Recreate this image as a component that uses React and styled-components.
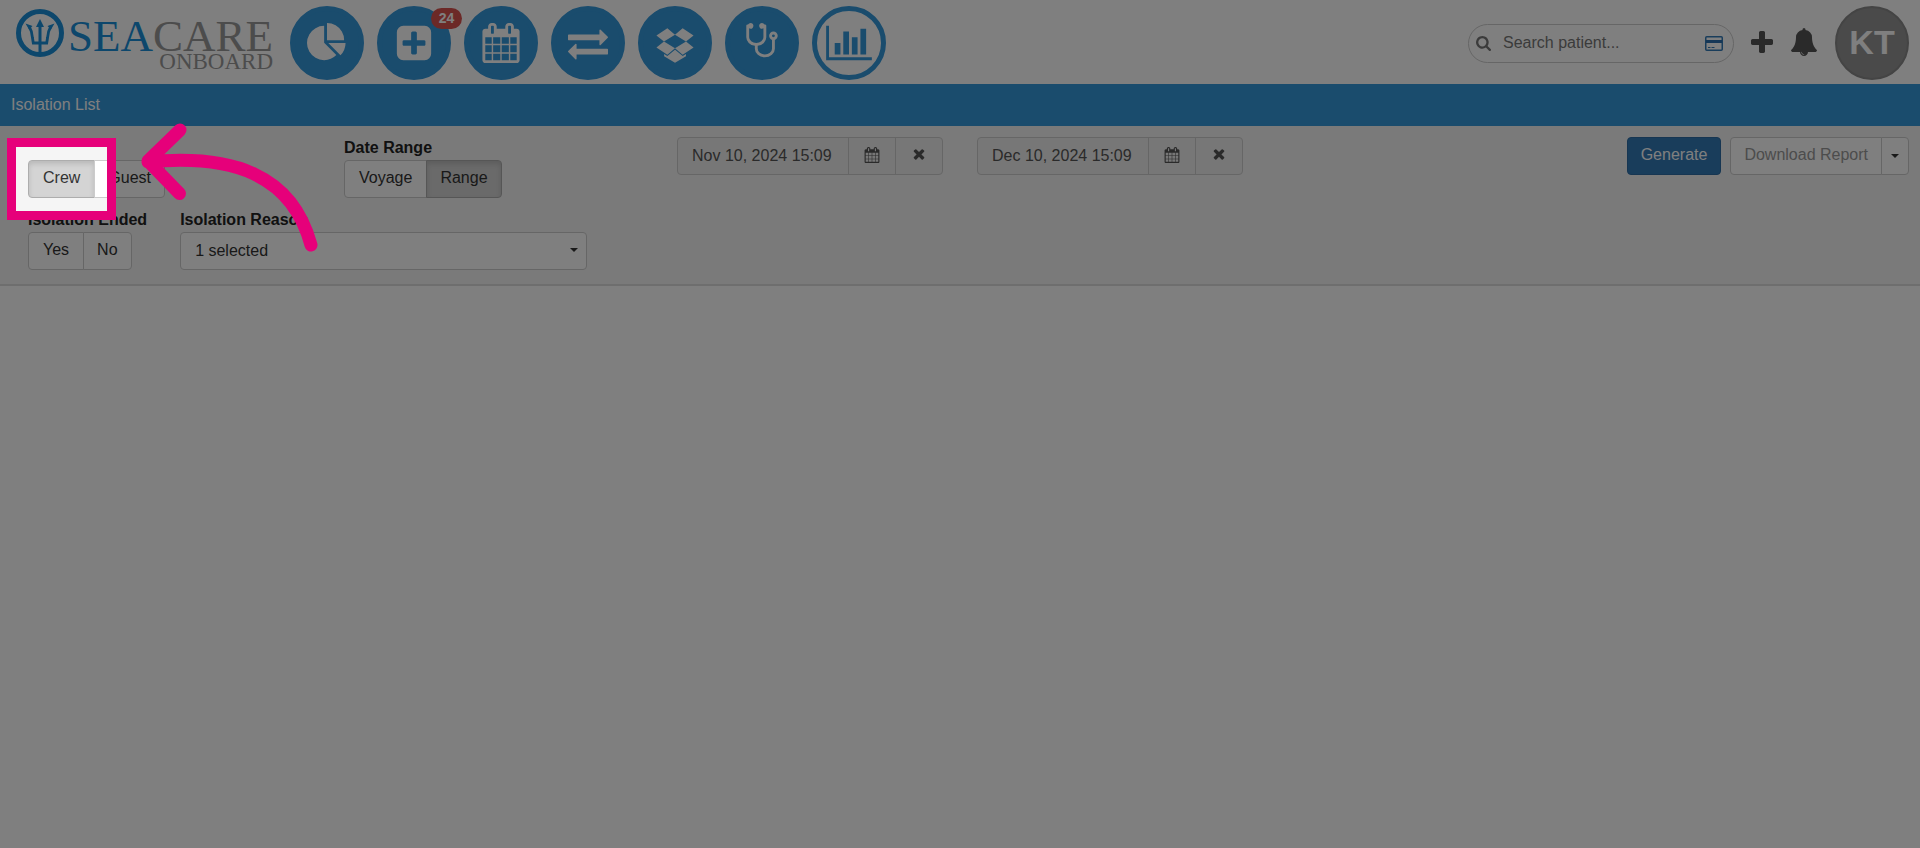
import React from 'react'
import styled, { createGlobalStyle } from 'styled-components'

const icons = {
  pie: {
    box: '0 0 1792 1792',
    d: 'M768 890l546 546q-106 108-247.500 168t-298.500 60q-209 0-385.500-103t-279.500-279.500-103-385.500 103-385.500 279.500-279.500 385.500-103v762zm187 6h773q0 157-60 298.500t-168 247.500zm709-128h-768v-768q209 0 385.500 103t279.500 279.500 103 385.500z',
  },
  plusSquare: {
    box: '0 0 1792 1792',
    d: 'M1408 960v-128q0-26-19-45t-45-19h-320v-320q0-26-19-45t-45-19h-128q-26 0-45 19t-19 45v320h-320q-26 0-45 19t-19 45v128q0 26 19 45t45 19h320v320q0 26 19 45t45 19h128q26 0 45-19t19-45v-320h320q26 0 45-19t19-45zm256-544v960q0 119-84.500 203.500t-203.500 84.500h-960q-119 0-203.500-84.500t-84.500-203.500v-960q0-119 84.500-203.500t203.500-84.500h960q119 0 203.500 84.500t84.500 203.500z',
  },
  calendar: {
    box: '0 0 1792 1792',
    d: 'M192 1664h288v-288h-288v288zm352 0h320v-288h-320v288zm-352-352h288v-320h-288v320zm352 0h320v-320h-320v320zm-352-384h288v-288h-288v288zm736 736h320v-288h-320v288zm-384-736h320v-288h-320v288zm768 736h288v-288h-288v288zm-384-352h320v-320h-320v320zm-352-864v-288q0-13-9.500-22.500t-22.500-9.500h-64q-13 0-22.500 9.500t-9.500 22.500v288q0 13 9.500 22.500t22.500 9.500h64q13 0 22.500-9.500t9.500-22.500zm736 864h288v-320h-288v320zm-384-384h320v-288h-320v288zm384 0h288v-288h-288v288zm32-480v-288q0-13-9.500-22.500t-22.500-9.500h-64q-13 0-22.500 9.500t-9.500 22.500v288q0 13 9.500 22.500t22.500 9.500h64q13 0 22.500-9.500t9.500-22.500zm384-64v1280q0 52-38 90t-90 38h-1408q-52 0-90-38t-38-90v-1280q0-52 38-90t90-38h128v-96q0-66 47-113t113-47h64q66 0 113 47t47 113v96h384v-96q0-66 47-113t113-47h64q66 0 113 47t47 113v96h128q52 0 90 38t38 90z',
  },
  exchange: {
    box: '0 0 1792 1792',
    d: 'M1792 1184v192q0 13-9.500 22.500t-22.500 9.500h-1376v192q0 13-9.500 22.500t-22.500 9.500q-12 0-24-10l-319-320q-9-9-9-22 0-14 9-23l320-320q9-9 23-9 13 0 22.500 9.500t9.500 22.500v192h1376q13 0 22.500 9.500t9.500 22.500zm0-544q0 14-9 23l-320 320q-9 9-23 9-13 0-22.500-9.500t-9.500-22.500v-192h-1376q-13 0-22.500-9.500t-9.500-22.500v-192q0-13 9.500-22.500t22.500-9.500h1376v-192q0-14 9-23t23-9q12 0 24 10l319 319q9 9 9 23z',
  },
  dropbox: {
    box: '0 0 1792 1792',
    d: 'M402 829l494 305-342 285-490-319zm986 555v108l-490 293v1l-1-1-1 1v-1l-489-293v-108l147 96 342-284v-2l1 1 1-1v2l343 284zm-834-1145l342 285-494 304-338-270zm836 590l338 271-489 319-343-285zm-152-590l489 319-338 270-494-304z',
  },
  stethoscope: {
    box: '-192 0 1792 1792',
    d: 'M1280 576q0-26-19-45t-45-19-45 19-19 45 19 45 45 19 45-19 19-45zm128 0q0 62-35.500 111t-92.500 70v395q0 159-131.500 271.500t-316.500 112.500-316.500-112.500-131.500-271.500v-132q-164-20-274-128t-110-252v-512q0-26 19-45t45-19q6 0 16 2 17-30 47-48t65-18q53 0 90.500 37.500t37.500 90.500-37.500 90.500-90.500 37.500q-33 0-64-18v402q0 106 94 181t226 75 226-75 94-181v-402q-31 18-64 18-53 0-90.500-37.500t-37.500-90.500 37.500-90.500 90.500-37.500q35 0 65 18t47 48q10-2 16-2 26 0 45 19t19 45v512q0 144-110 252t-274 128v132q0 106 94 181t226 75 226-75 94-181v-395q-57-21-92.500-70t-35.500-111q0-80 56-136t136-56 136 56 56 136z',
  },
  chart: {
    box: '0 0 2048 1792',
    d: 'M640 896v512h-256v-512h256zm384-512v1024h-256v-1024h256zm1024 1152v128h-2048v-1536h128v1408h1920zm-640-896v768h-256v-768h256zm384-384v1152h-256v-1152h256z',
  },
  search: {
    box: '64 128 1664 1664',
    d: 'M1216 832q0-185-131.500-316.500t-316.500-131.500-316.500 131.500-131.500 316.500 131.500 316.500 316.500 131.500 316.500-131.500 131.500-316.500zm512 832q0 52-38 90t-90 38q-54 0-90-38l-343-342q-179 124-399 124-143 0-273.500-55.500t-225-150-150-225-55.500-273.500 55.500-273.500 150-225 225-150 273.500-55.500 273.500 55.500 225 150 150 225 55.500 273.500q0 220-124 399l343 343q37 37 37 90z',
  },
  plus: {
    box: '192 128 1408 1408',
    d: 'M1600 736v192q0 40-28 68t-68 28h-416v416q0 40-28 68t-68 28h-192q-40 0-68-28t-28-68v-416h-416q-40 0-68-28t-28-68v-192q0-40 28-68t68-28h416v-416q0-40 28-68t68-28h192q40 0 68 28t28 68v416h416q40 0 68 28t28 68z',
  },
  bell: {
    box: '0 0 1792 1792',
    d: 'M912 1696q0-16-16-16-59 0-101.500-42.500t-42.500-101.500q0-16-16-16t-16 16q0 73 51.500 124.500t124.500 51.500q16 0 16-16zm816-288q0 52-38 90t-90 38h-448q0 106-75 181t-181 75-181-75-75-181h-448q-52 0-90-38t-38-90q50-42 91-88t85-119.500 74.500-158.500 50-206 19.500-260q0-152 117-282.500t307-158.500q-8-19-8-39 0-40 28-68t68-28 68 28 28 68q0 20-8 39 190 28 307 158.500t117 282.500q0 139 19.500 260t50 206 74.500 158.500 85 119.500 91 88z',
  },
  times: {
    box: '0 128 1792 1792',
    d: 'M1490 1322q0 40-28 68l-136 136q-28 28-68 28t-68-28l-294-294-294 294q-28 28-68 28t-68-28l-136-136q-28-28-28-68t28-68l294-294-294-294q-28-28-28-68t28-68l136-136q28-28 68-28t68 28l294 294 294-294q28-28 68-28t68 28l136 136q28 28 28 68t-28 68l-294 294 294 294q28 28 28 68z',
  },
}

const Icon = ({ name, size, width }) => (
  <svg width={width || size} height={size} viewBox={icons[name].box} fill="currentColor" aria-hidden="true">
    <path d={icons[name].d} />
  </svg>
)

const Caret = () => (
  <svg width="8" height="4" viewBox="0 0 8 4" fill="currentColor" aria-hidden="true">
    <path d="M0 0h8l-4 4z" />
  </svg>
)

const navItems = [
  { icon: 'pie', label: 'Dashboard' },
  { icon: 'plusSquare', label: 'Medical cases', badge: 24 },
  { icon: 'calendar', label: 'Calendar' },
  { icon: 'exchange', label: 'Transfers' },
  { icon: 'dropbox', label: 'Inventory' },
  { icon: 'stethoscope', label: 'Examinations' },
  { icon: 'chart', label: 'Reports', active: true },
]

const DateField = ({ label, value }) => (
  <DateGroup>
    <DateInput aria-label={label} defaultValue={value} readOnly />
    <AddonButton aria-label={`Pick ${label}`}><Icon name="calendar" size={16} /></AddonButton>
    <AddonButton aria-label={`Clear ${label}`}><Icon name="times" size={16} /></AddonButton>
  </DateGroup>
)

const App = () => (
  <Page>
    <GlobalStyle />
    <Header>
      <Logo href="#">
        <svg width="48" height="48" viewBox="0 0 48 48" fill="none" stroke="currentColor" aria-hidden="true">
          <circle cx="24" cy="24" r="21.500" strokeWidth="5" />
          <path d="M24 17v28" strokeWidth="3" />
          <path d="M24 10l4 8h-8z" fill="currentColor" stroke="none" />
          <path d="M13 17q3 5 3.500 12l.8 5h13.400l.8-5q.5-7 3.500-12" strokeWidth="2.800" />
          <path d="M9.500 14.500l7 2.500-3.500 3.500zM38.500 14.500l-7 2.500 3.500 3.500z" fill="currentColor" stroke="none" />
        </svg>
        <LogoText>
          <LogoName>SEA<span>CARE</span></LogoName>
          <LogoSub>ONBOARD</LogoSub>
        </LogoText>
      </Logo>
      <Nav>
        {navItems.map(item => (
          <NavLink key={item.icon} href="#" aria-label={item.label} $active={item.active}>
            <Icon name={item.icon} size={40} width={item.icon === 'chart' ? 46 : 40} />
            {item.badge ? <Badge>{item.badge}</Badge> : null}
          </NavLink>
        ))}
      </Nav>
      <Tools>
        <SearchBox>
          <Icon name="search" size={15} />
          <SearchInput type="text" aria-label="Search patient" placeholder="Search patient..." />
          <svg width="18" height="15" viewBox="0 0 18 15" fill="none" aria-hidden="true">
            <rect x=".75" y=".75" width="16.500" height="13.500" rx="1" stroke="#337ab7" strokeWidth="1.500" />
            <path d="M1 5.500h16" stroke="#2a6fae" strokeWidth="3" />
            <path d="M3 11.500h2.500M6.500 11.500h3" stroke="#337ab7" />
          </svg>
        </SearchBox>
        <ToolButton aria-label="Add"><Icon name="plus" size={22} /></ToolButton>
        <ToolButton aria-label="Notifications"><Icon name="bell" size={28} /></ToolButton>
        <Avatar>KT</Avatar>
      </Tools>
    </Header>
    <TitleBar>Isolation List</TitleBar>
    <Filters>
      <FilterRow>
        <Field $unlabelled>
          <Group>
            <Button $active>Crew</Button>
            <Button>Guest</Button>
          </Group>
        </Field>
        <Field role="group" aria-labelledby="date-range">
          <Label as="span" id="date-range">Date Range</Label>
          <Group>
            <Button>Voyage</Button>
            <Button $active>Range</Button>
          </Group>
        </Field>
        <DateField label="start date" value="Nov 10, 2024 15:09" />
        <LastCell>
          <DateField label="end date" value="Dec 10, 2024 15:09" />
          <Actions>
            <Button $primary>Generate</Button>
            <Group>
              <Button $muted>Download Report</Button>
              <Button $narrow aria-label="Download options"><Caret /></Button>
            </Group>
          </Actions>
        </LastCell>
      </FilterRow>
      <ReasonRow>
        <Field role="group" aria-labelledby="isolation-ended">
          <Label as="span" id="isolation-ended">Isolation Ended</Label>
          <Group>
            <Button>Yes</Button>
            <Button>No</Button>
          </Group>
        </Field>
        <Field>
          <Label htmlFor="reason">Isolation Reason</Label>
          <SelectWrap>
            <Select id="reason">
              <option>1 selected</option>
            </Select>
            <Caret />
          </SelectWrap>
        </Field>
      </ReasonRow>
    </Filters>
    <Spotlight />
    <Arrow width="180" height="136" viewBox="140 120 180 136" aria-hidden="true">
      <path d="M180 130L148 161L179.500 193.500M148 162C232 154 292 174 311 245" />
    </Arrow>
  </Page>
)

export default App

const GlobalStyle = createGlobalStyle`
*{
  box-sizing:border-box;
}
body{
  margin:0;
  background:#fff;
  color:#333;
  font-family:"Liberation Sans", Arial, sans-serif;
  font-size:16px;
  line-height:21px;
}
button,input,select{
  font:inherit;
  color:inherit;
  margin:0;
}
svg{
  display:block;
  flex:none;
}
`
const Page = styled.div`
position:relative;
min-height:100vh;
overflow:hidden;
`
const Header = styled.header`
display:flex;
align-items:center;
height:84px;
padding:2px 11px 0 16px;
`
const Logo = styled.a`
display:flex;
align-items:flex-start;
width:274px;
height:68px;
gap:4px;
color:#1a8fd8;
text-decoration:none;
font-family:"Liberation Serif", "Times New Roman", serif;
`
const LogoText = styled.div`
display:flex;
flex-direction:column;
align-items:flex-end;
padding-top:11px;
`
const LogoName = styled.div`
font-size:45px;
line-height:32px;
span{
  color:#999;
}
`
const LogoSub = styled.div`
font-size:23px;
line-height:20px;
color:#999;
`
const Nav = styled.nav`
display:flex;
gap:13px;
`
const NavLink = styled.a`
position:relative;
display:flex;
align-items:center;
justify-content:center;
width:74px;
height:74px;
border:5px solid #3498db;
border-radius:50%;
background:${props => props.$active ? '#fff' : '#3498db'};
color:${props => props.$active ? '#3498db' : '#fff'};
`
const Badge = styled.span`
position:absolute;
top:-3px;
right:-16px;
width:31px;
border-radius:11px;
background:#d9534f;
color:#fff;
font-size:14px;
font-weight:700;
line-height:21px;
text-align:center;
`
const Tools = styled.div`
display:flex;
align-items:center;
gap:17px;
margin-left:auto;
`
const SearchBox = styled.div`
display:flex;
align-items:center;
width:266px;
height:39px;
padding:0 10px 0 7px;
border:1px solid #ccc;
border-radius:20px;
color:#777;
`
const SearchInput = styled.input`
flex:1;
min-width:0;
padding:0 0 2px 12px;
border:0;
outline:none;
background:transparent;
&::placeholder{
  color:#777;
  opacity:1;
}
`
const ToolButton = styled.button`
padding:0 0 2px;
border:0;
background:none;
color:#555;
`
const Avatar = styled.div`
width:74px;
height:74px;
border:2px solid #888;
border-radius:50%;
background:#949494;
color:#fff;
font-size:34px;
font-weight:700;
line-height:68px;
text-align:center;
`
const TitleBar = styled.div`
height:42px;
padding:0 11px;
background:#3498db;
color:#fff;
line-height:42px;
`
const Filters = styled.form`
display:flex;
flex-direction:column;
gap:11px;
padding:11px 11px 14px 28px;
border-bottom:2px solid #ddd;
background:#f5f5f5;
`
const FilterRow = styled.div`
display:grid;
grid-template-columns:316fr 333fr 300fr 932fr;
`
const ReasonRow = styled.div`
display:flex;
gap:33px;
`
const Field = styled.div`
padding-top:${props => props.$unlabelled ? '23px' : '0'};
`
const Label = styled.label`
display:block;
margin-bottom:2px;
color:#222;
font-weight:700;
`
const Group = styled.div`
display:flex;
& > button + button{
  margin-left:-1px;
  border-top-left-radius:0;
  border-bottom-left-radius:0;
}
& > button:not(:last-child){
  border-top-right-radius:0;
  border-bottom-right-radius:0;
}
& > button:last-child:not(:has(svg)){
  padding-right:13px;
  padding-left:13px;
}
`
const Button = styled.button.attrs({ type: 'button' })`
height:38px;
padding:0 ${props => props.$narrow ? '9px' : props.$primary || props.$muted ? '13px' : '14px'} ${props => props.$narrow ? '0' : '3px'};
border:1px solid ${props => props.$primary ? '#2e6da4' : props.$active ? '#adadad' : '#ccc'};
border-radius:4px;
background:${props => props.$primary ? '#337ab7' : props.$active ? '#d4d4d4' : '#fff'};
box-shadow:${props => props.$active ? 'inset 0 3px 5px rgba(0,0,0,.125)' : 'none'};
color:${props => props.$primary ? '#fff' : props.$muted ? '#999' : '#333'};
`
const LastCell = styled.div`
display:flex;
justify-content:space-between;
align-items:flex-start;
`
const Actions = styled.div`
display:flex;
gap:9px;
`
const DateGroup = styled.div`
display:flex;
height:38px;
width:266px;
border:1px solid #ccc;
border-radius:4px;
background:#eee;
`
const DateInput = styled.input`
flex:1;
min-width:0;
padding:0 14px 2px;
border:0;
outline:none;
background:transparent;
color:#555;
`
const AddonButton = styled.button.attrs({ type: 'button' })`
display:flex;
align-items:center;
justify-content:center;
width:47px;
padding:0 0 2px;
border:0;
border-left:1px solid #ccc;
background:transparent;
color:#555;
`
const SelectWrap = styled.div`
display:grid;
grid-template-columns:1fr 16px;
align-items:center;
width:407px;
height:38px;
border:1px solid #ccc;
border-radius:4px;
background:#fff;
`
const Select = styled.select`
grid-area:1 / 1 / 2 / 3;
width:100%;
height:100%;
padding:0 14px 2px;
border:0;
outline:none;
appearance:none;
background:transparent;
& + svg{
  grid-area:1 / 2;
  margin-bottom:2px;
  pointer-events:none;
}
`
/* tour step: dims everything except the Crew button */
const Spotlight = styled.div`
position:absolute;
left:7px;
top:138px;
width:109px;
height:82px;
border:9px solid #e6007a;
box-shadow:0 0 0 4000px rgba(0,0,0,.5);
pointer-events:none;
`
const Arrow = styled.svg`
position:absolute;
left:140px;
top:120px;
fill:none;
stroke:#e6007a;
stroke-width:13;
stroke-linecap:round;
stroke-linejoin:round;
pointer-events:none;
`
